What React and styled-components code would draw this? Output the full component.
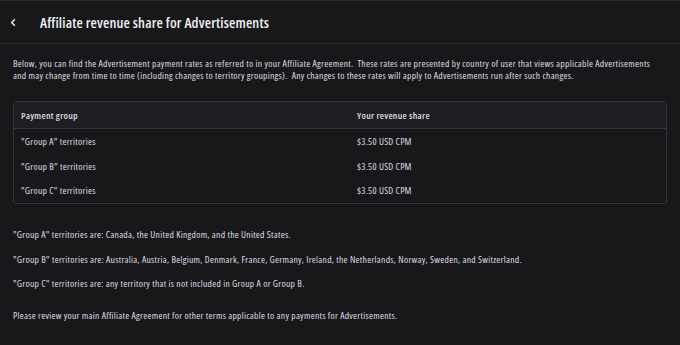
import React from 'react'
import styled, { createGlobalStyle } from 'styled-components'

const Global = createGlobalStyle`
  body {
    margin: 0;
    background: #18181b;
    font-family: "Open Sans", Inter, sans-serif;
    font-stretch: condensed;
    color: #efeff1;
  }
`

const Page = styled.div`
  width: 680px;
  height: 345px;
  background: #18181b;
  overflow: hidden;
`

const Header = styled.div`
  height: 44px;
  display: flex;
  align-items: center;
  border-top: 1px solid #2a2a2e;
  border-bottom: 1px solid #2f2f35;
  box-sizing: border-box;
`

const Back = styled.div`
  width: 40px;
  display: flex;
  justify-content: center;
  padding-right: 13px;
  box-sizing: border-box;
  color: #efeff1;
`

const Title = styled.h1`
  margin: 0;
  font-size: 14.5px;
  font-weight: 600;
  letter-spacing: 0.15px;
`

const Body = styled.div`
  padding: 14px 13px 0 13px;
`

const Text = styled.p`
  margin: 0 0 ${p => p.gap || 0}px 0;
  font-size: 9.6px;
  line-height: 11.5px;
  letter-spacing: 0.28px;
  color: #dedee3;
`

const Intro = styled(Text)`
  padding-right: 14px;
`

const Table = styled.div`
  border: 1px solid #35353b;
  border-radius: 3px;
  overflow: hidden;
  margin: 20px 0 25px 0;
`

const Row = styled.div`
  display: grid;
  grid-template-columns: 336px 1fr;
  height: ${p => (p.head ? 26 : 24.7)}px;
  align-items: center;
  padding-left: 7px;
  background: ${p => (p.head ? '#1f1f23' : '#18181b')};
  border-bottom: ${p => (p.head ? '1px solid #35353b' : 'none')};
  font-size: 9.6px;
  letter-spacing: 0.28px;
  font-weight: ${p => (p.head ? 600 : 400)};
  color: #dedee3;
`

const Cell = styled.div``

const rows = ['A', 'B', 'C']

export default function App() {
  return (
    <Page>
      <Global />
      <Header>
        <Back>
          <svg width="9" height="9" viewBox="0 0 10 10">
            <path d="M6.5 1.5 L3 5 L6.5 8.5" fill="none" stroke="#efeff1" strokeWidth="1.6" />
          </svg>
        </Back>
        <Title>Affiliate revenue share for Advertisements</Title>
      </Header>
      <Body>
        <Intro>
          Below, you can find the Advertisement payment rates as referred to in your Affiliate Agreement.&nbsp; These rates are presented by country of user that views applicable Advertisements and may change from time to time (including changes to territory groupings).&nbsp; Any changes to these rates will apply to Advertisements run after such changes.
        </Intro>
        <Table>
          <Row head>
            <Cell>Payment group</Cell>
            <Cell>Your revenue share</Cell>
          </Row>
          {rows.map(r => (
            <Row key={r}>
              <Cell>"Group {r}" territories</Cell>
              <Cell>$3.50 USD CPM</Cell>
            </Row>
          ))}
        </Table>
        <Text gap={13}>"Group A" territories are: Canada, the United Kingdom, and the United States.</Text>
        <Text gap={13}>"Group B" territories are: Australia, Austria, Belgium, Denmark, France, Germany, Ireland, the Netherlands, Norway, Sweden, and Switzerland.</Text>
        <Text gap={20}>"Group C" territories are: any territory that is not included in Group A or Group B.</Text>
        <Text>Please review your main Affiliate Agreement for other terms applicable to any payments for Advertisements.</Text>
      </Body>
    </Page>
  )
}
